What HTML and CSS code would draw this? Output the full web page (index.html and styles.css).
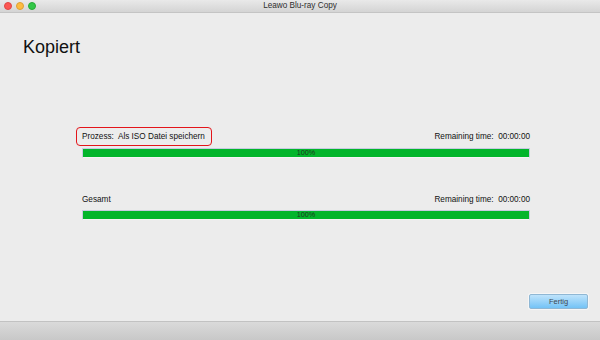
FILE: index.html
```html
<!DOCTYPE html>
<html>
<head>
<meta charset="utf-8">
<link rel="stylesheet" href="styles.css">
</head>
<body>
<div class="window">
  <div class="titlebar">
    <div class="lights">
      <span class="light red"></span>
      <span class="light yellow"></span>
      <span class="light green"></span>
    </div>
    <div class="title">Leawo Blu-ray Copy</div>
  </div>
  <div class="main">
    <h1 class="heading">Kopiert</h1>
    <div class="progress-group">
      <div class="row row-first">
        <span class="label boxed">Prozess:&nbsp; Als ISO Datei speichern</span>
        <span class="label">Remaining time:&nbsp; 00:00:00</span>
      </div>
      <div class="bar"><div class="fill" style="width:100%"></div><span class="pct">100%</span></div>
      <div class="row row-second">
        <span class="label plain">Gesamt</span>
        <span class="label">Remaining time:&nbsp; 00:00:00</span>
      </div>
      <div class="bar"><div class="fill" style="width:100%"></div><span class="pct">100%</span></div>
    </div>
    <div class="actions">
      <button class="btn">Fertig</button>
    </div>
  </div>
  <div class="footer"></div>
</div>
</body>
</html>
```

FILE: styles.css
```css
* { box-sizing: border-box; }
html, body { margin: 0; padding: 0; }
body {
  width: 600px;
  height: 340px;
  overflow: hidden;
  font-family: "Liberation Sans", Arial, sans-serif;
  background: #ececec;
  color: #1a1a1a;
}
.window {
  width: 600px;
  height: 340px;
  display: flex;
  flex-direction: column;
}
.titlebar {
  height: 13px;
  flex: none;
  position: relative;
  background: linear-gradient(#e9e9e9, #d4d4d4);
  border-bottom: 1px solid #c4c4c4;
  display: flex;
  align-items: center;
  justify-content: center;
}
.lights {
  position: absolute;
  left: 4px;
  top: 2px;
  display: flex;
  gap: 4px;
}
.light {
  width: 8px;
  height: 8px;
  border-radius: 50%;
  display: block;
}
.light.red { background: #fc5753; border: 0.5px solid #df4744; }
.light.yellow { background: #fdbc40; border: 0.5px solid #de9f34; }
.light.green { background: #33c748; border: 0.5px solid #27aa35; }
.title {
  font-size: 8.2px;
  color: #2e2e2e;
  line-height: 12px;
}
.main {
  flex: 1;
  display: flex;
  flex-direction: column;
}
.heading {
  margin: 24px 0 0 23px;
  font-size: 18px;
  font-weight: normal;
  line-height: 20px;
  color: #111;
}
.progress-group {
  margin: 70px 0 0 82px;
  width: 448px;
  display: flex;
  flex-direction: column;
}
.row {
  display: flex;
  justify-content: space-between;
  align-items: center;
  height: 19px;
}
.row-first { margin-bottom: 2px; }
.row-second { margin-top: 32px; margin-bottom: 1px; }
.label {
  font-size: 8.2px;
  line-height: 10px;
  color: #111;
  white-space: nowrap;
}
.boxed {
  margin-left: -6px;
  height: 19px;
  padding: 0 6px 0 5px;
  border: 1px solid #e3151a;
  border-radius: 4px;
  display: flex;
  align-items: center;
}
.bar {
  position: relative;
  height: 10px;
  background: #d8dde6;
  border: 1px solid #c6cbe0;
  border-bottom-color: #f4f4f4;
  display: flex;
  align-items: center;
  justify-content: center;
}
.fill {
  position: absolute;
  left: 0;
  top: 0;
  bottom: 0;
  background: #02b52b;
}
.pct {
  position: relative;
  font-size: 7.2px;
  line-height: 8px;
  color: #1f3320;
}
.actions {
  margin-top: auto;
  display: flex;
  justify-content: flex-end;
  padding: 0 12px 12px 0;
}
.btn {
  width: 59px;
  height: 15px;
  padding: 0;
  font-family: "Liberation Sans", Arial, sans-serif;
  font-size: 7.5px;
  color: #3e4852;
  background: linear-gradient(#bfe3fb, #73c3f6);
  border: 1px solid #8fb7d4;
  border-radius: 2px;
  box-shadow: 0 0 0 1px #f6f6f6;
}
.footer {
  height: 19px;
  flex: none;
  background: linear-gradient(#dadada, #c8c8c8);
  border-top: 1px solid #c2c2c2;
}
```
